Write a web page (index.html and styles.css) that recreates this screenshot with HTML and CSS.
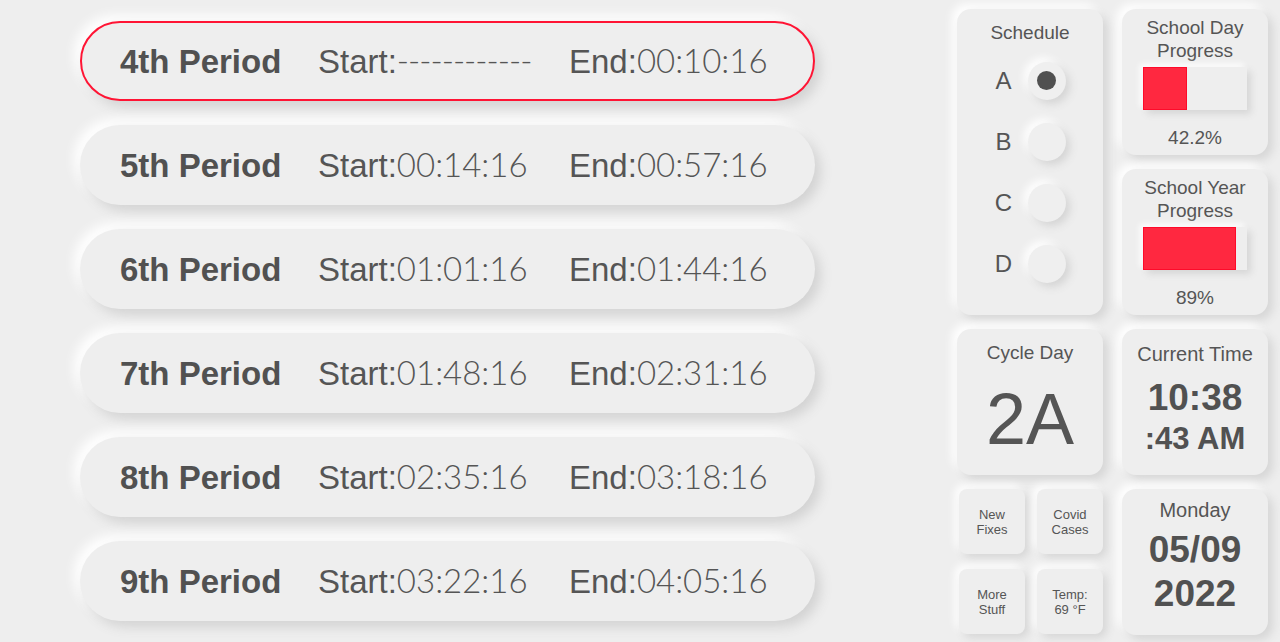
FILE: index.html
```html
<!DOCTYPE html>
<html lang="en">
<head>
<meta charset="utf-8">
<title>Bell Schedule</title>
<link rel="stylesheet" href="styles.css">
</head>
<body>
<main class="periods">
  <div class="period current">
    <span class="p-name">4th Period</span>
    <span class="p-time"><span class="lbl">Start:</span><span class="val dashes">------------</span></span>
    <span class="p-time"><span class="lbl">End:</span><span class="val">00:10:16</span></span>
  </div>
  <div class="period">
    <span class="p-name">5th Period</span>
    <span class="p-time"><span class="lbl">Start:</span><span class="val">00:14:16</span></span>
    <span class="p-time"><span class="lbl">End:</span><span class="val">00:57:16</span></span>
  </div>
  <div class="period">
    <span class="p-name">6th Period</span>
    <span class="p-time"><span class="lbl">Start:</span><span class="val">01:01:16</span></span>
    <span class="p-time"><span class="lbl">End:</span><span class="val">01:44:16</span></span>
  </div>
  <div class="period">
    <span class="p-name">7th Period</span>
    <span class="p-time"><span class="lbl">Start:</span><span class="val">01:48:16</span></span>
    <span class="p-time"><span class="lbl">End:</span><span class="val">02:31:16</span></span>
  </div>
  <div class="period">
    <span class="p-name">8th Period</span>
    <span class="p-time"><span class="lbl">Start:</span><span class="val">02:35:16</span></span>
    <span class="p-time"><span class="lbl">End:</span><span class="val">03:18:16</span></span>
  </div>
  <div class="period">
    <span class="p-name">9th Period</span>
    <span class="p-time"><span class="lbl">Start:</span><span class="val">03:22:16</span></span>
    <span class="p-time"><span class="lbl">End:</span><span class="val">04:05:16</span></span>
  </div>
</main>

<aside class="dash">
  <section class="card schedule">
    <div class="card-title">Schedule</div>
    <div class="sched-row"><span class="letter">A</span><span class="radio"><span class="dot"></span></span></div>
    <div class="sched-row"><span class="letter">B</span><span class="radio"></span></div>
    <div class="sched-row"><span class="letter">C</span><span class="radio"></span></div>
    <div class="sched-row"><span class="letter">D</span><span class="radio"></span></div>
  </section>

  <section class="card progress">
    <div class="prog-title">School Day<br>Progress</div>
    <div class="bar"><div class="fill" style="width:42.2%"></div></div>
    <div class="prog-val">42.2%</div>
  </section>

  <section class="card progress">
    <div class="prog-title">School Year<br>Progress</div>
    <div class="bar"><div class="fill" style="width:89%"></div></div>
    <div class="prog-val">89%</div>
  </section>

  <section class="card cycle">
    <div class="card-title">Cycle Day</div>
    <div class="cycle-val">2A</div>
  </section>

  <section class="card clock">
    <div class="card-title wide">Current Time</div>
    <div class="time-hm">10:38</div>
    <div class="time-s">:43 AM</div>
  </section>

  <section class="buttons">
    <div class="btn">New<br>Fixes</div>
    <div class="btn">Covid<br>Cases</div>
    <div class="btn">More<br>Stuff</div>
    <div class="btn">Temp:<br>69 °F</div>
  </section>

  <section class="card date">
    <div class="card-title wide">Monday</div>
    <div class="date-val">05/09<br>2022</div>
  </section>
</aside>
</body>
</html>
```

FILE: styles.css
```css
html, body {
  margin: 0;
  padding: 0;
  background: #eeeeee;
}

body {
  display: flex;
  align-items: flex-start;
  width: 1280px;
  height: 642px;
  overflow: hidden;
  font-family: "Liberation Sans", Arial, sans-serif;
  color: #555555;
}

/* ---------- period list ---------- */
.periods {
  display: flex;
  flex-direction: column;
  gap: 24px;
  padding: 21px 0 0 80px;
}

.period {
  box-sizing: border-box;
  width: 735px;
  height: 80px;
  border: 2px solid transparent;
  border-radius: 40px;
  background: #eeeeee;
  box-shadow: 6px 6px 12px #d3d3d3, -6px -6px 12px #ffffff;
  display: grid;
  grid-template-columns: 198px 251px auto;
  align-items: baseline;
  align-content: center;
  padding-left: 38px;
  font-size: 33px;
  line-height: 40px;
  white-space: nowrap;
}

.period.current {
  border-color: #ff1434;
}

.p-name {
  font-weight: bold;
  color: #515151;
}

.p-time .lbl {
  color: #555555;
}

.p-time .val {
  font-family: "Lato", "Liberation Sans", sans-serif;
  font-weight: 300;
  color: #555555;
}

.p-time .val.dashes {
  letter-spacing: -1px;
}

/* ---------- dashboard ---------- */
.dash {
  margin-left: 142px;
  margin-top: 9px;
  display: grid;
  grid-template-columns: 146px 146px;
  grid-template-rows: 146px 146px 146px 146px;
  column-gap: 19px;
  row-gap: 14px;
}

.card {
  box-sizing: border-box;
  background: #eeeeee;
  border-radius: 14px;
  box-shadow: 5px 5px 10px #d6d6d6, -5px -5px 10px #ffffff;
  display: flex;
  flex-direction: column;
  align-items: center;
  text-align: center;
}

.card-title {
  font-size: 19px;
  line-height: 24px;
}

.card-title.wide {
  font-size: 20px;
}

/* schedule */
.schedule {
  grid-row: 1 / span 2;
  padding-top: 12px;
}

.sched-row {
  height: 61px;
  display: flex;
  align-items: center;
  gap: 15px;
}

.schedule .card-title + .sched-row {
  margin-top: 5px;
}

.letter {
  width: 18px;
  text-align: center;
  font-size: 24px;
}

.radio {
  width: 38px;
  height: 38px;
  border-radius: 50%;
  background: #efefef;
  box-shadow: 4px 4px 8px #d4d4d4, -4px -4px 8px #ffffff;
  display: flex;
  align-items: center;
  justify-content: center;
}

.dot {
  width: 19px;
  height: 19px;
  border-radius: 50%;
  background: #505050;
}

/* progress */
.progress {
  padding-top: 7px;
}

.prog-title {
  font-size: 19px;
  line-height: 23px;
}

.bar {
  box-sizing: border-box;
  margin-top: 5px;
  width: 104px;
  height: 43px;
  background: #eeeeee;
  box-shadow: 4px 4px 7px #d6d6d6, -3px -3px 6px #ffffff;
}

.fill {
  box-sizing: border-box;
  height: 100%;
  background: #ff2840;
  border: 1px solid #ff0a2a;
}

.prog-val {
  margin-top: 16px;
  font-size: 19px;
  line-height: 23px;
}

/* cycle day */
.cycle {
  padding-top: 12px;
}

.cycle-val {
  margin-top: 14px;
  font-size: 72px;
  line-height: 80px;
}

/* clock */
.clock {
  padding-top: 13px;
}

.time-hm {
  font-weight: bold;
  font-size: 37px;
  line-height: 40px;
  margin-top: 12px;
  color: #515151;
}

.time-s {
  font-weight: bold;
  font-size: 31px;
  line-height: 42px;
  color: #515151;
}

/* date */
.date {
  padding-top: 9px;
}

.date-val {
  font-weight: bold;
  font-size: 37px;
  line-height: 44px;
  margin-top: 6px;
  color: #515151;
}

/* small buttons */
.buttons {
  display: grid;
  grid-template-columns: 66px 66px;
  grid-template-rows: 65px 65px;
  column-gap: 12px;
  row-gap: 15px;
  padding-left: 2px;
  align-content: start;
}

.btn {
  background: #eeeeee;
  border-radius: 8px;
  box-shadow: 4px 4px 8px #d6d6d6, -4px -4px 8px #ffffff;
  display: flex;
  align-items: center;
  justify-content: center;
  text-align: center;
  font-size: 13px;
  line-height: 15px;
  color: #555555;
}
```
